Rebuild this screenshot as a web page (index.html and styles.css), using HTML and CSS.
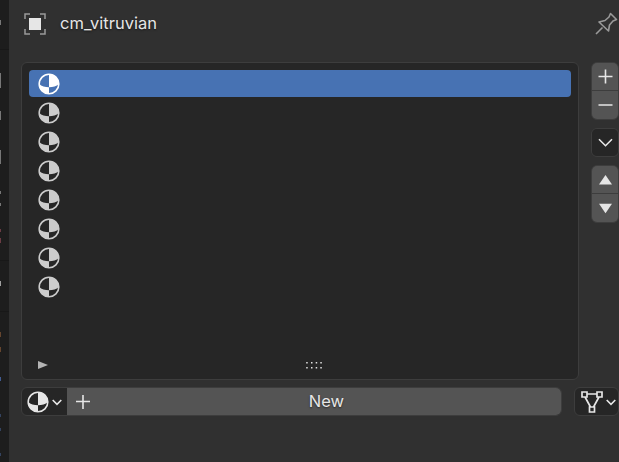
FILE: index.html
```html
<!DOCTYPE html>
<html lang="en">
<head>
<meta charset="utf-8">
<title>Material properties</title>
<link rel="stylesheet" href="styles.css">
</head>
<body>
<svg class="defs" width="0" height="0" aria-hidden="true">
  <symbol id="material" viewBox="0 0 22 22">
    <circle cx="11" cy="11" r="9.800" fill="none" stroke="currentColor" stroke-width="1.600"/>
    <path fill="currentColor" d="M11 1A10 10 0 0 1 21 11Q17 14.200 11 14.200ZM1 11Q5 14.200 11 14.200V21A10 10 0 0 1 1 11Z"/>
  </symbol>
</svg>
<div class="editor">
  <aside class="tabs">
    <svg width="9" height="462" viewBox="0 0 9 462">
      <path fill="#181818" d="M0 49h9v1H0zM0 260h9v1H0zM0 311h9v1H0z"/>
      <path fill="#777" d="M0 20h1v5H0zM0 73h1v15H0zM0 111h1v9H0zM0 150h1v14H0zM0 191h1v3H0zM0 203h1v3H0z"/>
      <path fill="#6b3c44" d="M0 229h1v3H0zM0 238h1v5H0z"/>
      <path fill="#a0a0a0" d="M0 281h1v5H0z"/>
      <path fill="#65452e" d="M0 332h1v5H0zM0 347h1v5H0z"/>
      <path fill="#415b91" d="M0 377h1v4H0z"/>
      <path fill="#34435f" d="M0 414h1v3H0zM0 428h1v3H0zM0 453h1v3H0z"/>
    </svg>
  </aside>
  <main class="panel">
    <header class="context">
      <svg width="22" height="22" viewBox="0 0 22 22">
        <path d="M1 6V1H6M16 1H21V6M21 16V21H16M6 21H1V16" fill="none" stroke="#999" stroke-width="1.500"/>
        <rect x="5" y="5" width="12" height="12" fill="#e6e6e6"/>
      </svg>
      <span class="name">cm_vitruvian</span>
      <svg class="pin" width="23" height="23" viewBox="0 0 23 23">
        <path d="M1 22L7.500 15.500M4 10L13.500 19L14.500 13L18 9L21.500 7.500L15.500 1.500L14 5L10 8.500Z" fill="none" stroke="#999" stroke-width="1.600" stroke-linejoin="round"/>
      </svg>
    </header>
    <section class="slots">
      <div class="list">
        <div class="row selected"><svg><use href="#material"/></svg></div>
        <div class="row"><svg><use href="#material"/></svg></div>
        <div class="row"><svg><use href="#material"/></svg></div>
        <div class="row"><svg><use href="#material"/></svg></div>
        <div class="row"><svg><use href="#material"/></svg></div>
        <div class="row"><svg><use href="#material"/></svg></div>
        <div class="row"><svg><use href="#material"/></svg></div>
        <div class="row"><svg><use href="#material"/></svg></div>
        <footer class="grip">
          <svg width="10" height="8" viewBox="0 0 10 8"><path d="M0 0L10 4L0 8Z" fill="#b4b4b4"/></svg>
          <svg class="dots" width="17" height="8" viewBox="0 0 17 8"><path d="M.2 1h1.500v1.500H.2zM5 1h1.500v1.500H5zM9.700 1h1.500v1.500H9.700zM14.300 1h1.500v1.500h-1.500zM.2 6h1.500v1.500H.2zM5 6h1.500v1.500H5zM9.700 6h1.500v1.500H9.700zM14.300 6h1.500v1.500h-1.500z" fill="#e0e0e0"/></svg>
        </footer>
      </div>
      <div class="side">
        <div class="group">
          <button><svg viewBox="0 0 26 27"><path d="M6.500 13.500H20.500M13.500 6.500V20.500" class="line"/></svg></button>
          <button><svg viewBox="0 0 26 27"><path d="M6.500 13H20.500" class="line"/></svg></button>
        </div>
        <div class="group dark">
          <button><svg viewBox="0 0 26 27"><path d="M7 10.200L13.500 16.700L20 10.200" class="line"/></svg></button>
        </div>
        <div class="group">
          <button><svg viewBox="0 0 26 27"><path d="M13.500 9L20 18.500H7Z" fill="#e6e6e6"/></svg></button>
          <button><svg viewBox="0 0 26 27"><path d="M7 8.800H20L13.500 18.300Z" fill="#e6e6e6"/></svg></button>
        </div>
      </div>
    </section>
    <section class="datablock">
      <div class="field">
        <div class="browse">
          <svg width="22" height="22"><use href="#material"/></svg>
          <svg class="chev" width="10" height="7" viewBox="0 0 10 7"><path d="M.7 1L5 5.300L9.300 1" class="line"/></svg>
        </div>
        <button class="new">
          <svg width="14" height="14" viewBox="0 0 14 14"><path d="M0 6.500H14M7 0V14" class="line"/></svg>
          <span>New</span>
        </button>
      </div>
      <div class="link">
        <svg width="22" height="22" viewBox="0 0 22 22"><path d="M1 1h5v5H1zM16 1h5v5h-5zM8.500 16h5v5h-5zM6 3H16M4 6L9.500 16M18 6L12.500 16" fill="none" stroke="#e6e6e6" stroke-width="1.700"/></svg>
        <svg class="chev" width="10" height="7" viewBox="0 0 10 7"><path d="M.7 1L5 5.300L9.300 1" class="line"/></svg>
      </div>
    </section>
  </main>
</div>
</body>
</html>
```

FILE: styles.css
```css
* { box-sizing: border-box; }
body {
  margin: 0;
  overflow: hidden;
  background: #303030;
  color: #e6e6e6;
  font: 16.5px/20px Inter, "Liberation Sans", sans-serif;
}
svg { display: block; flex: none; }
.defs { position: absolute; }
button { border: 0; padding: 0; color: inherit; font: inherit; }
.line { fill: none; stroke: #e6e6e6; stroke-width: 1.6; }
.editor { display: flex; width: 619px; height: 462px; }
.tabs { width: 9px; background: #1d1d1d; }
.panel { width: 610px; padding-left: 12px; }
.context {
  display: flex;
  align-items: center;
  height: 62px;
  padding: 0 1px 15px 3px;
}
.name { margin-left: 14px; padding-bottom: 2px; text-shadow: 0 1px 2px #0008; }
.pin { margin-left: auto; }
.slots { display: flex; gap: 12px; height: 318px; }
.list {
  display: flex;
  flex-direction: column;
  gap: 2px;
  width: 558px;
  padding: 7px;
  background: #262626;
  border: 1px solid #3d3d3d;
  border-radius: 6px;
}
.row {
  display: flex;
  align-items: center;
  height: 27px;
  padding-left: 9px;
  border-radius: 4px;
  color: #cccccc;
}
.row svg { width: 22px; height: 22px; }
.selected { background: #4772b3; color: #fff; }
.grip { display: flex; align-items: center; margin-top: auto; height: 14px; padding-left: 8.5px; }
.dots { margin-left: 258.5px; }
.side { width: 28px; }
.group {
  display: flex;
  flex-direction: column;
  gap: 1px;
  margin-bottom: 8px;
  border: 1px solid #3d3d3d;
  border-radius: 6px;
  background: #3d3d3d;
  overflow: hidden;
}
.group button { height: 27px; background: #545454; }
.group button + button { height: 28px; }
.group svg { width: 26px; height: 27px; }
.group.dark button { background: #262626; }
.datablock { display: flex; gap: 12px; margin-top: 7px; height: 29px; }
.field, .link {
  display: flex;
  flex: none;
  border: 1px solid #3d3d3d;
  border-radius: 6px;
  background: #262626;
  overflow: hidden;
}
.field { width: 541px; }
.browse { display: flex; align-items: center; width: 45px; padding-left: 5px; }
.chev { margin: 2px 0 0 2.5px; }
.new { display: flex; align-items: center; flex: 1; padding-left: 9px; background: #545454; }
.new span { flex: 1; padding: 0 0 2px 2px; text-align: center; text-shadow: 0 1px 2px #0008; }
.link { align-items: center; width: 45px; padding-left: 6px; }
```
